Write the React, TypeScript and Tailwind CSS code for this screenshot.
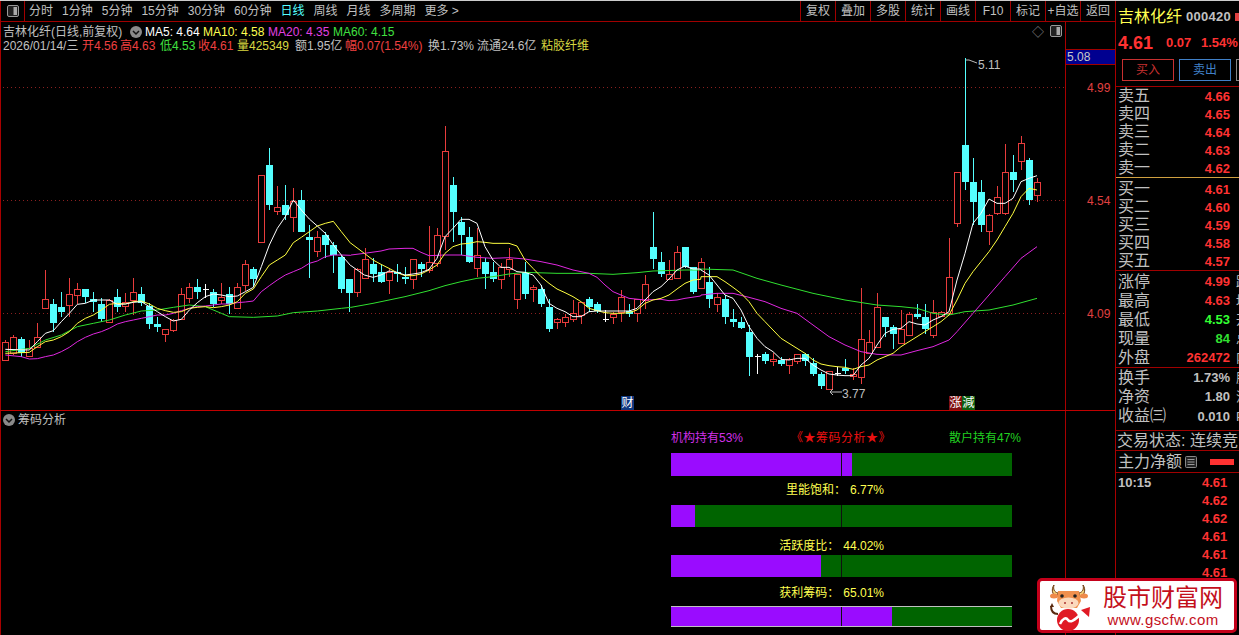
import React from 'react';

// screen positions read from the chart: [up, high, bodyTop, bodyBottom, low], zoomed 3x
type C = [number, number, number, number, number];

const first: C[] = [
  [1, 660, 665, 720, 720], [1, 645, 652, 700, 705], [0, 650, 657, 700, 712], [1, 660, 685, 708, 712],
  [1, 610, 652, 680, 685], [1, 450, 538, 563, 565], [0, 538, 552, 610, 635], [0, 517, 561, 575, 590],
  [1, 475, 523, 555, 590], [1, 490, 508, 524, 553], [0, 507, 507, 530, 548], [0, 517, 538, 545, 575],
  [0, 533, 552, 597, 605], [1, 537, 540, 607, 607], [0, 508, 531, 560, 575], [1, 520, 547, 557, 575],
  [1, 475, 517, 540, 585], [0, 502, 522, 548, 558], [0, 550, 557, 612, 627], [0, 592, 612, 622, 635],
  [1, 628, 628, 643, 665], [1, 597, 600, 630, 635], [1, 505, 523, 597, 600], [1, 490, 501, 533, 548],
  [0, 478, 501, 516, 537], [2, 493, 507, 507, 533], [0, 508, 517, 553, 560], [1, 490, 531, 540, 553],
  [0, 502, 522, 553, 582], [1, 490, 501, 563, 565], [1, 420, 433, 495, 513], [0, 442, 447, 477, 500],
  [1, 165, 165, 367, 367], [0, 85, 135, 255, 270], [1, 197, 262, 272, 285], [0, 195, 255, 285, 300],
  [1, 205, 242, 292, 335], [0, 210, 240, 335, 335], [0, 315, 351, 359, 475], [1, 333, 351, 392, 410],
  [0, 335, 345, 375, 415], [0, 365, 375, 404, 460], [0, 405, 411, 507, 520], [0, 477, 477, 520, 575],
];

const second: C[] = [
  [1, 445, 447, 517, 530], [1, 385, 417, 473, 475], [0, 415, 432, 462, 485], [0, 435, 457, 486, 490],
  [1, 447, 457, 479, 522], [0, 432, 457, 462, 485], [0, 440, 470, 477, 492], [1, 418, 418, 478, 507],
  [0, 425, 432, 447, 470], [1, 317, 427, 450, 460], [1, 325, 346, 430, 440], [1, 18, 92, 348, 390],
  [0, 172, 195, 275, 365], [0, 292, 305, 345, 405], [0, 322, 352, 425, 430], [1, 325, 405, 443, 470],
  [0, 415, 427, 462, 507], [0, 425, 457, 476, 485], [1, 430, 441, 478, 507], [1, 385, 418, 447, 470],
  [1, 462, 463, 538, 567], [0, 425, 457, 522, 537], [1, 495, 502, 508, 545], [0, 495, 507, 552, 560],
  [0, 538, 561, 627, 636], [1, 595, 598, 607, 627], [1, 582, 592, 607, 622], [1, 541, 578, 598, 605],
  [1, 545, 547, 585, 612], [0, 532, 537, 562, 575], [0, 547, 553, 572, 580], [2, 570, 598, 598, 605],
  [1, 575, 583, 592, 612], [1, 510, 532, 577, 605], [0, 552, 573, 581, 590], [1, 537, 538, 578, 605],
  [1, 465, 493, 540, 567], [0, 277, 381, 416, 447], [0, 397, 427, 462, 472], [1, 420, 462, 478, 480],
  [1, 378, 397, 473, 475], [0, 381, 381, 440, 445], [0, 440, 442, 515, 522],
];

const third: C[] = [
  [1, 625, 635, 713, 715], [0, 650, 695, 747, 775], [1, 730, 741, 763, 787], [0, 735, 747, 800, 822],
  [0, 778, 807, 815, 830], [0, 800, 815, 833, 836], [0, 825, 847, 920, 978], [2, 912, 918, 918, 972],
  [0, 905, 911, 933, 942], [1, 908, 927, 934, 948], [0, 922, 931, 941, 947], [1, 925, 928, 944, 972],
  [1, 912, 913, 933, 942], [0, 910, 912, 933, 948], [0, 925, 940, 972, 977], [0, 965, 972, 1007, 1017],
  [1, 962, 963, 1018, 1020], [2, 950, 970, 970, 977], [0, 927, 955, 963, 972], [1, 955, 972, 978, 990],
  [1, 715, 868, 980, 1002], [1, 840, 877, 910, 912], [1, 730, 771, 892, 895], [0, 800, 802, 832, 860],
  [0, 825, 832, 851, 897], [1, 780, 838, 878, 880], [1, 785, 793, 854, 856], [0, 762, 792, 802, 806],
  [0, 762, 801, 837, 852], [1, 750, 787, 855, 865], [1, 782, 787, 797, 800], [1, 565, 682, 790, 795],
  [1, 367, 367, 518, 530], [0, 25, 285, 395, 420], [0, 325, 396, 455, 525], [0, 390, 427, 525, 545],
  [1, 492, 495, 542, 585], [1, 408, 441, 488, 495], [1, 282, 367, 488, 495], [0, 315, 366, 390, 427],
  [1, 258, 280, 332, 360], [0, 325, 331, 450, 465], [1, 385, 397, 436, 456],
];

const toY = (c: C, off: number) => [c[0], c[1] / 3 + off, c[2] / 3 + off, c[3] / 3 + off, c[4] / 3 + off].map(Math.round);

const candles = [...first.map((c) => toY(c, 120)), ...second.map((c) => toY(c, 120)), ...third.map((c) => toY(c, 50))];

type P = [number, number];
const join = (a: P[], b: P[], c: P[]) =>
  [
    ...a.map(([x, y]) => `${x / 3},${y / 3 + 120}`),
    ...b.map(([x, y]) => `${x / 3 + 350},${y / 3 + 120}`),
    ...c.map(([x, y]) => `${x / 3 + 700},${y / 3 + 50}`),
  ].join(' ');

const ma5 = join(
  [[13,688],[85,690],[109,665],[133,640],[157,632],[181,605],[205,580],[229,553],[253,550],[277,540],[301,540],[325,540],[349,553],[373,552],[397,547],[421,545],[445,560],[469,575],[493,590],[517,603],[541,598],[565,570],[589,548],[613,530],[637,522],[661,525],[685,530],[709,528],[733,515],[757,502],[781,440],[805,375],[829,325],[853,290],[877,240],[901,270],[925,297],[949,318],[973,340],[997,375],[1021,405],[1049,437]],
  [[0,437],[40,465],[66,472],[90,465],[114,453],[138,457],[162,465],[186,462],[210,458],[234,448],[258,415],[282,350],[306,325],[330,298],[354,298],[378,310],[402,380],[426,420],[450,442],[474,442],[498,455],[522,457],[546,465],[570,495],[594,550],[618,565],[642,575],[666,590],[690,590],[714,575],[738,573],[762,573],[786,573],[810,573],[834,573],[858,565],[882,540],[906,515],[930,500],[954,477],[978,450],[1002,438],[1026,447],[1049,447]],
  [[0,660],[24,675],[48,705],[72,735],[96,745],[120,780],[144,830],[168,865],[192,890],[216,905],[240,928],[264,930],[288,925],[312,925],[336,945],[360,960],[384,972],[408,975],[432,977],[456,977],[480,945],[504,925],[528,885],[552,850],[576,838],[600,835],[624,815],[648,822],[672,825],[696,810],[720,800],[744,785],[768,690],[792,610],[816,520],[840,490],[864,447],[888,460],[912,460],[936,445],[960,395],[984,385],[1008,377]],
);

const ma10 = join(
  [[13,700],[85,697],[109,680],[133,665],[157,660],[181,650],[205,635],[229,610],[253,595],[277,585],[301,570],[325,553],[349,550],[373,552],[397,545],[421,543],[445,552],[469,565],[493,572],[517,577],[541,575],[565,565],[589,562],[613,560],[637,563],[661,560],[685,555],[709,545],[733,520],[757,507],[781,470],[805,435],[829,420],[853,405],[877,368],[901,352],[925,335],[949,318],[973,310],[997,304],[1021,335],[1049,370]],
  [[0,370],[40,400],[66,420],[90,433],[114,445],[138,458],[162,467],[186,467],[210,462],[234,450],[258,435],[282,400],[306,380],[330,372],[354,370],[378,365],[402,367],[426,370],[450,370],[474,370],[498,378],[522,420],[546,445],[570,470],[594,490],[618,507],[642,518],[666,530],[690,545],[714,565],[738,572],[762,578],[786,580],[810,580],[834,578],[858,570],[882,550],[906,540],[930,535],[954,525],[978,507],[1002,490],[1026,480],[1049,478]],
  [[0,680],[48,680],[72,695],[96,712],[120,730],[144,755],[168,790],[192,815],[216,840],[240,865],[264,880],[288,895],[312,910],[336,930],[360,942],[384,947],[408,950],[432,952],[456,958],[480,950],[504,945],[528,930],[552,920],[576,910],[600,890],[624,875],[648,860],[672,845],[696,830],[720,815],[744,795],[768,750],[792,700],[816,665],[840,635],[864,605],[888,570],[912,530],[936,490],[960,440],[984,415],[1008,420]],
);

const ma20 = join(
  [[13,705],[61,710],[85,717],[109,716],[133,710],[157,705],[181,695],[205,682],[229,665],[253,652],[277,642],[301,635],[325,625],[349,612],[373,605],[397,600],[421,595],[445,590],[469,585],[493,585],[517,580],[541,572],[565,565],[589,560],[613,558],[637,555],[661,552],[685,552],[709,548],[733,546],[757,543],[781,515],[805,497],[829,480],[853,465],[877,455],[901,445],[925,430],[949,423],[973,410],[997,405],[1021,405],[1049,406]],
  [[0,405],[40,400],[90,393],[114,387],[162,385],[186,385],[210,397],[234,407],[282,405],[330,405],[378,412],[426,415],[474,413],[498,415],[522,417],[570,425],[618,435],[666,450],[714,460],[738,472],[762,495],[786,515],[810,525],[834,535],[882,540],[930,538],[954,542],[978,540],[1002,535],[1049,528]],
  [[0,735],[48,730],[96,730],[144,742],[192,755],[240,775],[288,790],[336,825],[384,860],[432,885],[480,905],[528,913],[576,915],[600,915],[648,902],[696,890],[744,870],[768,845],[816,790],[864,735],[912,680],[960,625],[1008,590]],
);

const ma60 = join(
  [[13,695],[85,685],[133,660],[181,645],[229,620],[277,610],[325,600],[373,585],[421,573],[469,570],[517,562],[565,555],[613,560],[661,580],[685,590],[757,592],[829,588],[877,578],[949,573],[1021,565],[1049,562]],
  [[0,562],[66,550],[114,540],[162,530],[234,512],[282,497],[330,485],[378,475],[426,470],[474,462],[522,457],[618,460],[714,460],[786,463],[858,458],[906,453],[1002,450],[1049,450]],
  [[0,657],[96,660],[168,685],[240,705],[336,730],[432,750],[528,765],[600,770],[648,775],[696,790],[744,795],[792,785],[864,780],[936,765],[1008,745]],
);

const periods = ['分时', '1分钟', '5分钟', '15分钟', '30分钟', '60分钟', '日线', '周线', '月线', '多周期', '更多 >'];
const tools = ['复权', '叠加', '多股', '统计', '画线', 'F10', '标记', '+自选', '返回'];

function Chevron({ className }: { className: string }) {
  return (
    <svg viewBox="0 0 12 12" className={className}>
      <circle cx="6" cy="6" r="6" fill="#8a8a8a" />
      <path d="M3 5l3 3 3-3" fill="none" stroke="#111" strokeWidth="1.5" />
    </svg>
  );
}

function SplitIcon() {
  return (
    <svg viewBox="0 0 12 12" className="h-3 w-3">
      <rect x="0.5" y="0.5" width="11" height="11" rx="1.5" fill="#222" stroke="#999" />
      <rect x="6.5" y="2" width="3.5" height="8" fill="#aaa" />
    </svg>
  );
}

function KChart() {
  return (
    <svg width="1065" height="388" viewBox="0 22 1065 388" className="absolute left-0 top-0">
      {[87, 200, 313].map((y) => (
        <line key={y} x1="2" x2="1065" y1={y + 0.5} y2={y + 0.5} stroke="#8a2020" strokeDasharray="1 3" />
      ))}
      <g shapeRendering="crispEdges">
        {candles.map((c, i) => {
          const x = 4.5 + 8 * i;
          const [kind, high, top, bottom, low] = c;
          if (kind === 2) {
            return (
              <g key={i} stroke="#ffffff">
                <line x1={x} x2={x} y1={high} y2={low} />
                <line x1={x - 3} x2={x + 3} y1={top + 0.5} y2={top + 0.5} />
              </g>
            );
          }
          if (kind === 0) {
            return (
              <g key={i}>
                <line x1={x} x2={x} y1={high} y2={low} stroke="#54ffff" />
                <rect x={x - 3.5} y={top} width="7" height={Math.max(bottom - top, 1)} fill="#54ffff" />
              </g>
            );
          }
          return (
            <g key={i} stroke="#e83c3c">
              <line x1={x} x2={x} y1={high} y2={top} />
              <line x1={x} x2={x} y1={bottom} y2={low} />
              <rect x={x - 3} y={top + 0.5} width="6" height={Math.max(bottom - top, 1)} fill="#000" />
            </g>
          );
        })}
      </g>
      <polyline points={ma60} fill="none" stroke="#30e030" />
      <polyline points={ma20} fill="none" stroke="#e028e0" />
      <polyline points={ma10} fill="none" stroke="#ffff40" />
      <polyline points={ma5} fill="none" stroke="#ffffff" />
      <path d="M965 60h3l8 3" fill="none" stroke="#bbb" />
      <path d="M841 392h-12m3-3l-3 3 3 3" fill="none" stroke="#bbb" />
    </svg>
  );
}

function Ratio({ pct, className }: { pct: number; className: string }) {
  return (
    <div className={`relative h-[22px] bg-[#006400] ${className}`}>
      <div className="h-full bg-[#9a0cff]" style={{ width: `${pct}%` }} />
      <div className="absolute left-[170px] top-0 h-full w-px bg-[#111]" />
    </div>
  );
}

function RatioLabel({ label, value, className }: { label: string; value: string; className: string }) {
  return (
    <div className={`flex h-[14px] items-center justify-end gap-[4px] pr-[128px] text-[#ffff50] ${className}`}>
      <span className="whitespace-nowrap">{label}：</span>
      <span className="whitespace-nowrap">{value}</span>
    </div>
  );
}

function Quote({ label, value, color = 'text-[#ff3232]', extra }: { label: string; value: string; color?: string; extra?: string }) {
  return (
    <div className="flex h-full items-center">
      <span className="w-[50px] shrink-0 whitespace-nowrap pl-[2px] text-[16px] leading-none text-[#c0c0c0]">{label}</span>
      <span className={`w-[64px] shrink-0 text-right text-[13px] font-bold leading-none ${color}`}>{value}</span>
      {extra && <span className="ml-[6px] whitespace-nowrap text-[13px] leading-none text-[#c0c0c0]">{extra}</span>}
    </div>
  );
}

function Logo() {
  return (
    <div className="absolute left-[1037px] top-[578px] flex h-[55px] w-[200px] items-center rounded-[5px] border-[3px] border-[#c4001a] bg-white">
      <svg viewBox="0 0 50 50" className="ml-[9px] h-[50px] w-[50px] shrink-0">
        <path d="M9 33c-5 0-7-3-7-8" fill="none" stroke="#5a2a10" strokeWidth="2" />
        <path d="M1 26l2-4 2 4z" fill="#5a2a10" />
        <path d="M9 12c-4-1-5-4-4-8-3 4-2 10 3 12z" fill="#f3d27a" stroke="#6b3a12" strokeWidth="1" />
        <path d="M30 12c4-1 5-4 4-8 3 4 2 10-3 12z" fill="#f3d27a" stroke="#6b3a12" strokeWidth="1" />
        <ellipse cx="5" cy="15" rx="4" ry="2.500" fill="#ef8a4a" />
        <ellipse cx="35" cy="15" rx="4" ry="2.500" fill="#ef8a4a" />
        <path d="M9 10h21l2 10-4 7H12l-4-7z" fill="#f0904e" />
        <ellipse cx="19.500" cy="22" rx="10" ry="5.500" fill="#fbd9bd" />
        <circle cx="13" cy="15" r="1.800" fill="#222" />
        <circle cx="26" cy="15" r="1.800" fill="#222" />
        <circle cx="16" cy="22" r="1" fill="#a33" />
        <circle cx="23" cy="22" r="1" fill="#a33" />
        <circle cx="19" cy="39" r="11" fill="#e01a24" />
        <path d="M11 43c3-6 6-7 8-4s6 1 14-7" fill="none" stroke="#fff" strokeWidth="2.500" />
        <path d="M41 26l-1 10-8-7z" fill="#e01a24" />
      </svg>
      <div className="ml-[4px] flex flex-col items-center pt-[2px]">
        <span className="whitespace-nowrap text-[24px] leading-[26px] text-[#c4101c]">股市财富网</span>
        <span className="whitespace-nowrap text-[15px] leading-[18px] tracking-[0.4px] text-[#c4101c]">www.gscfw.com</span>
      </div>
    </div>
  );
}

export default function App() {
  return (
    <div className="relative flex h-[635px] w-[1239px] flex-col overflow-hidden bg-black font-['Liberation_Sans','Noto_Sans_CJK_SC',sans-serif] text-[12px] text-[#c0c0c0]">
      <div className="h-px shrink-0 bg-[#cccccc]" />
      <div className="flex h-[634px]">
        {/* left: toolbar, chart, indicator pane */}
        <div className="flex w-[1116px] shrink-0 flex-col border-r border-[#a80000]">
          <div className="flex h-[21px] shrink-0 items-center border-b border-[#a00000]">
            <div className="flex h-full w-[25px] shrink-0 items-center justify-center border-x border-[#a00000] pl-[1px]">
              <SplitIcon />
            </div>
            <div className="ml-[4px] flex gap-[9px] whitespace-nowrap">
              {periods.map((p) => (
                <span key={p} className={p === '日线' ? 'text-[#54ffff]' : ''}>{p}</span>
              ))}
            </div>
            <div className="ml-auto flex h-full">
              {tools.map((t) => (
                <span key={t} className="flex w-[35px] items-center justify-center border-l border-[#a00000] whitespace-nowrap">{t}</span>
              ))}
            </div>
          </div>

          <div className="flex h-[389px] shrink-0 border-b border-[#c00000]">
            <div className="relative h-full w-[1066px] shrink-0 border-x border-[#a80000]">
              <KChart />
              <div className="relative flex h-[17px] items-center gap-[3px] whitespace-nowrap pl-[2px] pt-[2px]">
                <span className="w-[124px]">吉林化纤(日线,前复权)</span>
                <Chevron className="h-3 w-3" />
                <span className="w-[55px] text-white">MA5: 4.64</span>
                <span className="w-[62px] text-[#ffff50]">MA10: 4.58</span>
                <span className="w-[62px] text-[#e040e0]">MA20: 4.35</span>
                <span className="text-[#40e040]">MA60: 4.15</span>
              </div>
              <div className="relative flex h-[13px] items-center gap-[3px] whitespace-nowrap pl-[2px]">
                <span className="w-[76px]">2026/01/14/三</span>
                <span className="w-[35px] text-[#f04040]">开4.56</span>
                <span className="w-[37px] text-[#f04040]">高4.63</span>
                <span className="w-[35px] text-[#40e040]">低4.53</span>
                <span className="w-[36px] text-[#f04040]">收4.61</span>
                <span className="w-[55px] text-[#d8d840]">量425349</span>
                <span className="w-[47px]">额1.95亿</span>
                <span className="w-[80px] text-[#f04040]">幅0.07(1.54%)</span>
                <span className="w-[46px]">换1.73%</span>
                <span className="w-[61px]">流通24.6亿</span>
                <span className="text-[#d8d840]">粘胶纤维</span>
              </div>
              <span className="absolute left-[1031px] top-[2px] text-[12px] text-[#888]">◇</span>
              <span className="absolute left-[1049px] top-[3px]"><SplitIcon /></span>
              <span className="absolute left-[977px] top-[34px] text-[#c0c0c0]">5.11</span>
              <span className="absolute left-[841px] top-[363px] text-[#c0c0c0]">3.77</span>
              <span className="absolute left-[620px] top-[374px] h-[14px] w-[13px] bg-[#103880] text-center leading-[14px] text-white">财</span>
              <span className="absolute left-[948px] top-[374px] h-[14px] w-[13px] bg-[#801010] text-center leading-[14px] text-white">涨</span>
              <span className="absolute left-[961px] top-[374px] h-[14px] w-[13px] bg-[#106010] text-center leading-[14px] text-white">減</span>
            </div>
            <div className="relative flex-1 text-[#e04040]">
              <span className="absolute left-0 top-[27px] flex h-[16px] w-[49px] items-center border-y border-[#a00000] bg-[#000090] pl-[1px] text-[#c8c8c8]">5.08</span>
              <span className="absolute left-[21px] top-[57px]">4.99</span>
              <span className="absolute left-[21px] top-[170px]">4.54</span>
              <span className="absolute left-[21px] top-[283px]">4.09</span>
            </div>
          </div>

          <div className="flex min-h-0 flex-1">
            <div className="w-[1066px] shrink-0 border-x border-[#a80000]">
              <div className="flex h-[17px] items-center gap-[3px] pl-[2px]">
                <Chevron className="h-3 w-3" />
                <span>筹码分析</span>
              </div>
              <div className="ml-[670px] flex w-[341px] flex-col">
                <div className="mt-[3px] flex h-[14px] items-center whitespace-nowrap">
                  <span className="w-[120px] shrink-0 text-[#d030e8]">机构持有53%</span>
                  <span className="w-[158px] shrink-0 tracking-[0.5px] text-[#e81010]">《★筹码分析★》</span>
                  <span className="shrink-0 text-[#20d020]">散户持有47%</span>
                </div>
                <Ratio pct={53} className="mt-[8px] !h-[23px]" />
                <RatioLabel label="里能饱和" value="6.77%" className="mt-[7px]" />
                <Ratio pct={7} className="mt-[8px]" />
                <RatioLabel label="活跃度比" value="44.02%" className="mt-[12px]" />
                <Ratio pct={44} className="mt-[2px]" />
                <RatioLabel label="获利筹码" value="65.01%" className="mt-[9px]" />
                <Ratio pct={64.7} className="mt-[6px] !h-[21px] border-y border-[#c0c0c0]" />
              </div>
            </div>
          </div>
        </div>

        {/* right: quote panel */}
        <div className="min-w-0 flex-1 overflow-hidden">
          <div className="h-[86px] shrink-0 border-b border-[#a00000]">
            <div className="flex h-[31px] items-center pl-[2px] whitespace-nowrap">
              <span className="w-[69px] text-[16px] text-[#ffff50]">吉林化纤</span>
              <span className="text-[13px] font-bold tracking-[0.3px] text-[#c0c0c0]">000420</span>
              <span className="ml-[4px] h-[8px] w-[4px] bg-[#e04040]" />
            </div>
            <div className="flex h-[22px] items-center pl-[2px] whitespace-nowrap text-[#ff3232]">
              <span className="w-[48px] text-[18px] font-bold">4.61</span>
              <span className="w-[35px] text-[13px] font-bold">0.07</span>
              <span className="text-[13px] font-bold">1.54%</span>
            </div>
            <div className="ml-[6px] mt-[5px] flex gap-[5px]">
              <span className="flex h-[22px] w-[52px] shrink-0 items-center justify-center border border-[#c83030] text-[#c83030]">买入</span>
              <span className="flex h-[22px] w-[52px] shrink-0 items-center justify-center border border-[#4080c8] text-[#4080c8]">卖出</span>
              <span className="h-[22px] w-[52px] shrink-0 border border-[#888]" />
            </div>
          </div>
          <div className="grid h-[91px] grid-rows-5 border-b border-[#d0a040]">
            <Quote label="卖五" value="4.66" />
            <Quote label="卖四" value="4.65" />
            <Quote label="卖三" value="4.64" />
            <Quote label="卖二" value="4.63" />
            <Quote label="卖一" value="4.62" />
          </div>
          <div className="grid h-[93px] grid-rows-5 border-b border-[#a00000] pt-[2px]">
            <Quote label="买一" value="4.61" />
            <Quote label="买二" value="4.60" />
            <Quote label="买三" value="4.59" />
            <Quote label="买四" value="4.58" />
            <Quote label="买五" value="4.57" />
          </div>
          <div className="grid h-[97px] grid-rows-5 border-b border-[#a00000] pt-[1px]">
            <Quote label="涨停" value="4.99" extra="跌" />
            <Quote label="最高" value="4.63" extra="均" />
            <Quote label="最低" value="4.53" color="text-[#32ff32]" extra="开" />
            <Quote label="现量" value="84" color="text-[#32e032]" extra="总" />
            <Quote label="外盘" value="262472" extra="内" />
          </div>
          <div className="grid h-[63px] grid-rows-3 border-b border-[#a00000] pb-[4px]">
            <Quote label="换手" value="1.73%" color="text-[#c0c0c0]" extra="股" />
            <Quote label="净资" value="1.80" color="text-[#c0c0c0]" extra="流" />
            <Quote label="收益㈢" value="0.010" color="text-[#c0c0c0]" extra="P" />
          </div>
          <div className="flex h-[20px] items-center overflow-hidden border-b border-[#a00000] whitespace-nowrap pl-[1px] text-[16px]">交易状态: 连续竞</div>
          <div className="flex h-[22px] items-center border-b border-[#a00000] pl-[2px] text-[16px]">
            <span className="w-[64px] shrink-0 whitespace-nowrap">主力净额</span>
            <svg viewBox="0 0 12 12" className="ml-[3px] h-3 w-3">
              <rect x="0.5" y="0.5" width="11" height="11" rx="1" fill="#222" stroke="#888" />
              <path d="M2.5 3.5h7M2.5 6h7M2.5 8.500h7" stroke="#999" />
            </svg>
            <span className="ml-[13px] h-[6px] w-[24px] bg-[#ff3232]" />
          </div>
          <div className="pt-px">
            {['10:15', '', '', '', '', ''].map((t, i) => (
              <div key={i} className="flex h-[18px] items-center pl-[2px] text-[13px] font-bold">
                <span className="w-[84px] text-[#c0c0c0]">{t}</span>
                <span className="text-[#ff3232]">{['4.61', '4.62', '4.62', '4.61', '4.61', '4.61'][i]}</span>
              </div>
            ))}
          </div>
        </div>
      </div>
      <Logo />
    </div>
  );
}
